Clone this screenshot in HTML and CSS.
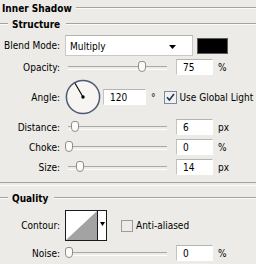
FILE: index.html
```html
<!DOCTYPE html>
<html>
<head>
<meta charset="utf-8">
<link rel="stylesheet" href="styles.css">
</head>
<body>
<div class="panel">
  <div class="title"><span class="title-text">Inner Shadow</span><i class="rule"></i></div>
  <div class="legend"><i class="rule lead"></i><span class="legend-text">Structure</span><i class="rule"></i></div>

  <div class="row row-blend">
    <span class="lbl">Blend Mode:</span>
    <div class="ctl">
      <div class="select"><span class="select-text">Multiply</span>
        <svg class="select-arrow" width="7" height="4" viewBox="0 0 7 4"><path d="M0 0H7L3.5 4Z" fill="#000"/></svg>
      </div>
      <div class="swatch"></div>
    </div>
  </div>

  <div class="row">
    <span class="lbl">Opacity:</span>
    <div class="ctl">
      <div class="slider"><i class="thumb" style="left:73px"></i></div>
      <div class="field">75</div><span class="unit">%</span>
    </div>
  </div>

  <div class="row row-angle">
    <span class="lbl">Angle:</span>
    <div class="ctl">
      <svg class="dial" width="36" height="36" viewBox="0 0 36 36">
        <circle cx="18" cy="18" r="16.6" fill="#f6f5f2" stroke="#4e5976" stroke-width="1.5"/>
        <line x1="18" y1="18" x2="10" y2="4.2" stroke="#000" stroke-width="1.1"/>
        <circle cx="18" cy="18" r="1.7" fill="#000"/>
      </svg>
      <div class="field field-angle">120</div><span class="deg">°</span>
      <svg class="check" width="13" height="13" viewBox="0 0 13 13">
        <rect x="0.5" y="0.5" width="12" height="12" fill="#f1f1ee" stroke="#7c8ba5"/>
        <path d="M3 6.2L5.4 9L10 3" fill="none" stroke="#23345e" stroke-width="1.6"/>
      </svg>
      <span class="check-text">Use Global Light</span>
    </div>
  </div>

  <div class="row">
    <span class="lbl">Distance:</span>
    <div class="ctl">
      <div class="slider"><i class="thumb" style="left:6px"></i></div>
      <div class="field">6</div><span class="unit">px</span>
    </div>
  </div>

  <div class="row">
    <span class="lbl">Choke:</span>
    <div class="ctl">
      <div class="slider"><i class="thumb" style="left:0px"></i></div>
      <div class="field">0</div><span class="unit">%</span>
    </div>
  </div>

  <div class="row">
    <span class="lbl">Size:</span>
    <div class="ctl">
      <div class="slider"><i class="thumb" style="left:11px"></i></div>
      <div class="field">14</div><span class="unit">px</span>
    </div>
  </div>

  <div class="sep"></div>

  <div class="legend"><i class="rule lead"></i><span class="legend-text">Quality</span><i class="rule"></i></div>

  <div class="row row-contour">
    <span class="lbl">Contour:</span>
    <div class="ctl">
      <div class="contour">
        <svg class="contour-preview" width="31" height="29" viewBox="0 0 31 29">
          <rect width="31" height="29" fill="#fff"/>
          <path d="M0 29L31 0V29Z" fill="#a3a3a3"/>
        </svg>
        <div class="contour-drop">
          <svg width="5" height="4" viewBox="0 0 5 4"><path d="M0 0H5L2.5 4Z" fill="#000"/></svg>
        </div>
      </div>
      <svg class="check check-aa" width="12" height="12" viewBox="0 0 12 12">
        <rect x="0.5" y="0.5" width="11" height="11" fill="#ecebe7" stroke="#9c9c9c"/>
      </svg>
      <span class="check-text">Anti-aliased</span>
    </div>
  </div>

  <div class="row">
    <span class="lbl">Noise:</span>
    <div class="ctl">
      <div class="slider"><i class="thumb" style="left:0px"></i></div>
      <div class="field">0</div><span class="unit">%</span>
    </div>
  </div>
</div>
</body>
</html>
```
FILE: styles.css
```css
* { box-sizing: border-box; }
html, body { margin: 0; padding: 0; }
body {
  background: #ecebe7;
  font-family: "DejaVu Sans Condensed", "DejaVu Sans", sans-serif;
  font-size: 10px;
  color: #000;
}
.panel {
  width: 256px;
  height: 264px;
  overflow: hidden;
  display: flex;
  flex-direction: column;
}
.rule {
  flex: 1;
  height: 2px;
  border-top: 1px solid #a4a3a0;
  border-bottom: 1px solid #fbfbfa;
}
.rule.lead { flex: 0 0 8px; }
.title {
  height: 16px;
  display: flex;
  align-items: center;
  padding-left: 2px;
}
.title-text { font-weight: bold; margin-right: 4px; }
.legend {
  height: 16px;
  display: flex;
  align-items: center;
}
.legend-text { font-weight: bold; margin: 0 6px 0 4px; }

.row {
  display: grid;
  grid-template-columns: 60px 1fr;
  column-gap: 5px;
  align-items: center;
  height: 20px;
}
.lbl { text-align: right; white-space: nowrap; }
.ctl { display: flex; align-items: center; }

.row-blend { height: 25px; padding-top: 2px; }
.select {
  width: 128px;
  height: 21px;
  background: #fff;
  border: 1px solid #c9c8c4;
  border-top-color: #b4b3af;
  display: flex;
  align-items: center;
  padding: 2px 0 0 4px;
}
.select-text { flex: 1; }
.select-arrow { margin-right: 16px; }
.swatch {
  width: 31px;
  height: 16px;
  margin-left: 4px;
  background: #000;
  border: 1px solid #5c5c5c;
}

.slider {
  position: relative;
  width: 102px;
  height: 14px;
}
.slider::before {
  content: "";
  position: absolute;
  left: 3px;
  right: 0;
  top: 6px;
  height: 2px;
  border-top: 1px solid #a9a8a4;
  border-bottom: 1px solid #fdfdfc;
}
.thumb {
  position: absolute;
  top: 1px;
  width: 8px;
  height: 11px;
  background: #fbfbfa;
  border: 1px solid #8e8e8c;
  border-radius: 3px 3px 4px 4px;
}
.field {
  width: 37px;
  height: 16px;
  margin-left: 9px;
  background: #fff;
  border: 1px solid #fff;
  border-top-color: #b5b4b0;
  border-left-color: #c4c3bf;
  padding: 2px 0 0 6px;
  line-height: 12px;
}
.unit { margin-left: 5px; }

.row-angle { height: 40px; }
.dial { display: block; }
.field-angle { width: 43px; margin-left: 2px; }
.deg { margin-left: 5px; }
.check { display: block; margin-left: 8px; }
.check-text { margin-left: 3px; white-space: nowrap; }

.sep {
  height: 13px;
  padding-top: 5px;
}
.sep::before {
  content: "";
  display: block;
  height: 2px;
  border-top: 1px solid #a4a3a0;
  border-bottom: 1px solid #fbfbfa;
}

.row-contour { height: 37px; padding-top: 2px; }
.contour {
  display: flex;
  width: 42px;
  height: 31px;
  border: 1px solid #1b1b1b;
  background: #fff;
}
.contour-preview { display: block; }
.contour-drop {
  flex: 1;
  border-left: 1px solid #1b1b1b;
  display: flex;
  align-items: center;
  justify-content: center;
  padding-bottom: 4px;
}
.contour-drop svg { display: block; }
.check-aa { margin-left: 14px; }
```
